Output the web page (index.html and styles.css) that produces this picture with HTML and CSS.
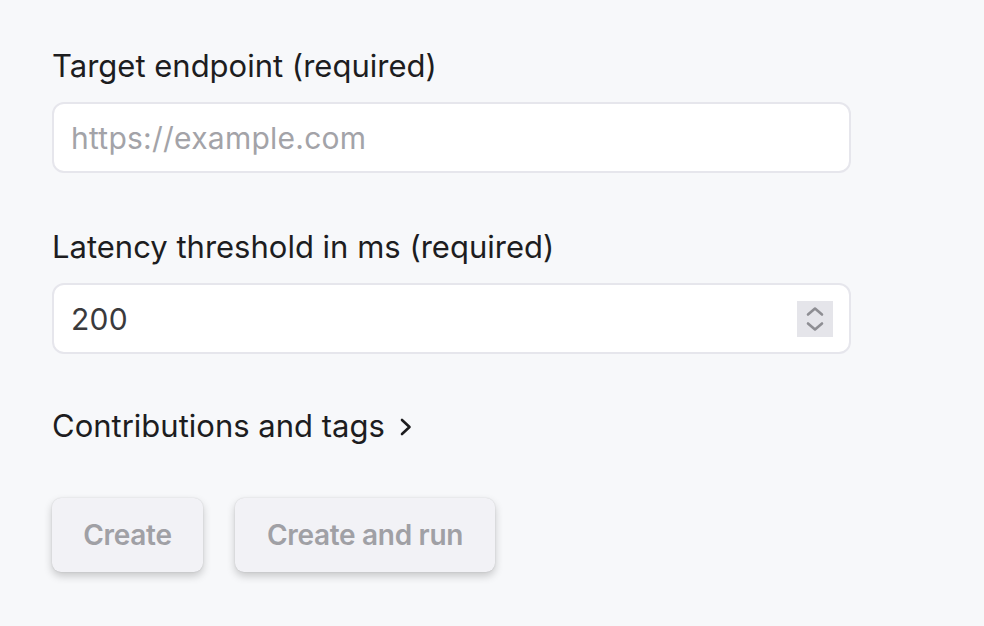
FILE: index.html
```html
<!DOCTYPE html>
<html>
<head>
<meta charset="utf-8">
<link rel="stylesheet" href="styles.css">
</head>
<body>
<form class="form">
  <div class="field">
    <label class="label">Target endpoint (required)</label>
    <div class="input"><span class="placeholder">https://example.com</span></div>
  </div>
  <div class="field">
    <label class="label">Latency threshold in ms (required)</label>
    <div class="input"><span class="value">200</span>
      <span class="spinner">
        <svg width="36" height="36" viewBox="0 0 36 36"><path d="M11 13.5 L18 7.5 L25 13.5" fill="none" stroke="#8e8e93" stroke-width="2.6" stroke-linecap="round" stroke-linejoin="round"/><path d="M11 22.5 L18 28.5 L25 22.5" fill="none" stroke="#8e8e93" stroke-width="2.6" stroke-linecap="round" stroke-linejoin="round"/></svg>
      </span>
    </div>
  </div>
  <div class="disclosure">Contributions and tags
    <svg class="chev" width="14" height="22" viewBox="0 0 14 22"><path d="M3 4 L10.5 11 L3 18" fill="none" stroke="#1d1d1f" stroke-width="2.6" stroke-linecap="round" stroke-linejoin="round"/></svg>
  </div>
  <div class="actions">
    <button type="button" class="btn btn-create">Create</button>
    <button type="button" class="btn btn-run">Create and run</button>
  </div>
</form>
</body>
</html>
```
FILE: styles.css
```css
html, body {
  margin: 0;
  padding: 0;
  background: #f7f8fa;
  font-family: Inter, "Noto Sans", sans-serif;
}
.form {
  width: 799px;
  padding: 47px 0 40px 52px;
  display: flex;
  flex-direction: column;
}
.field {
  display: flex;
  flex-direction: column;
  gap: 17px;
  margin-bottom: 55px;
}
.field + .field { margin-bottom: 53px; }
.label {
  font-size: 31px;
  line-height: 38px;
  color: #1d1d1f;
}
.input {
  box-sizing: border-box;
  height: 71px;
  background: #fff;
  border: 2px solid #e6e6ec;
  border-radius: 12px;
  display: flex;
  align-items: center;
  padding: 0 16px 0 17px;
  font-size: 30px;
  letter-spacing: 0.25px;
}
.placeholder { color: #a3a3a8; }
.value { color: #3a3a3c; flex: 1; }
.spinner {
  width: 36px;
  height: 36px;
  background: #e5e5ea;
  display: flex;
}
.disclosure {
  font-size: 31px;
  line-height: 38px;
  color: #1d1d1f;
  display: flex;
  align-items: center;
  gap: 14px;
}
.chev { margin-top: 2px; }
.actions {
  display: flex;
  gap: 32px;
  margin-top: 53px;
}
.btn {
  height: 74px;
  border: none;
  border-radius: 9px;
  background: #f2f2f6;
  box-shadow: 0 4px 8px rgba(0,0,0,0.2), 0 0 1.5px rgba(0,0,0,0.15);
  color: #a0a0a5;
  font-family: Inter, "Noto Sans", sans-serif;
  font-weight: 600;
  font-size: 28px;
  letter-spacing: -0.3px;
  padding: 0;
}
.btn-create { width: 151px; }
.btn-run { width: 260px; }
```
